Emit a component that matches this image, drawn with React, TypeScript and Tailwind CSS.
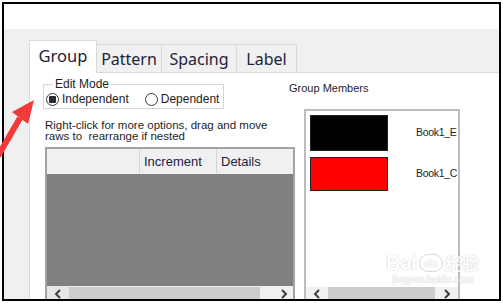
import React from 'react';

const Chevron = ({ dir }: { dir: 'left' | 'right' }) => (
  <svg width="8" height="10" viewBox="0 0 8 10" className="shrink-0">
    <polyline
      points={dir === 'left' ? '6,1 2,5 6,9' : '2,1 6,5 2,9'}
      fill="none"
      stroke="#404040"
      strokeWidth="2"
    />
  </svg>
);

const Radio = ({ checked, label, className }: { checked?: boolean; label: string; className?: string }) => (
  <div className={`flex items-center ${className ?? ''}`}>
    <div className="w-[13px] h-[13px] rounded-full border border-[#3a3a3a] bg-white flex items-center justify-center">
      {checked && <div className="w-[7px] h-[7px] bg-[#2a2a2a] rounded-[1px]" />}
    </div>
    <span className="ml-[3px] text-[12px] leading-[16px] text-[#1e1e1e]">{label}</span>
  </div>
);

const tabs = ['Group', 'Pattern', 'Spacing', 'Label'];
const tabWidths = ['w-[68px]', 'w-[65px]', 'w-[75px]', 'w-[60px]'];

const members = [
  { color: 'bg-black', name: 'Book1_E', h: 'h-[36px]' },
  { color: 'bg-[#ff0000]', name: 'Book1_C', h: 'h-[34px]' },
];

export default function App() {
  return (
    <div className="relative w-[503px] h-[303px] bg-white p-[2px] overflow-hidden font-['Liberation_Sans',Arial,sans-serif]">
      <div className="h-[299px] border-2 border-black flex flex-col overflow-hidden">
        <div className="h-[25px] bg-white shrink-0" />
        <div className="flex-1 bg-[#f0f0f0] pl-[25px] pt-[11px] flex flex-col min-h-0">
          {/* Tabs */}
          <div className="flex items-end h-[33px] relative z-10 shrink-0 font-['Noto_Sans',sans-serif]">
            {tabs.map((t, i) =>
              i === 0 ? (
                <div
                  key={t}
                  className={`${tabWidths[i]} h-[33px] bg-white border border-b-0 border-[#d9d9d9] flex items-center justify-center text-[16.5px] text-[#22223a] pb-[2px]`}
                >
                  {t}
                </div>
              ) : (
                <div
                  key={t}
                  className={`${tabWidths[i]} h-[28px] mb-[1px] bg-[#f0f0f0] border border-l-0 border-b-0 border-[#d9d9d9] flex items-center justify-center text-[16px] text-[#22223a]`}
                >
                  {t}
                </div>
              )
            )}
          </div>

          {/* Panel */}
          <div className="flex-1 -mt-px bg-white border-t border-l border-[#d9d9d9] pl-[13px] flex min-h-0">
            {/* Left column */}
            <div className="w-[252px] shrink-0 flex flex-col pt-[5px]">
              <fieldset className="w-[181px] border border-[#d5d5d5] px-[2px] pb-[1px]">
                <legend className="ml-[7px] px-[2px] text-[12px] leading-[13px] text-[#1e1e1e]">Edit Mode</legend>
                <div className="flex items-center h-[16px]">
                  <Radio checked label="Independent" />
                  <Radio label="Dependent" className="ml-[16px]" />
                </div>
              </fieldset>

              <p className="mt-[11px] ml-[2px] text-[11.5px] leading-[11px] text-[#1e1e1e] whitespace-nowrap">
                Right-click for more options, drag and move
                <br />
                raws to&nbsp; rearrange if nested
              </p>

              <div className="mt-[5px] ml-[2px] w-[250px] h-[160px] shrink-0 border-2 border-[#a3a3a3] flex flex-col">
                <div className="h-[25px] flex bg-[#f0f0f0] text-[13px] text-[#1c1c48]">
                  <div className="w-[93px] border-r border-[#d4d4d4]" />
                  <div className="w-[77px] border-r border-[#d4d4d4] pl-[4px] flex items-center">Increment</div>
                  <div className="flex-1 pl-[4px] flex items-center">Details</div>
                </div>
                <div className="h-[112px] bg-[#808080]" />
                <div className="h-[16px] bg-[#f0f0f0] flex items-center">
                  <div className="w-[22px] h-full flex items-center justify-center bg-[#e6e6e6]">
                    <Chevron dir="left" />
                  </div>
                  <div className="w-[191px] h-[14px] bg-[#cdcdcd]" />
                  <div className="flex-1 h-full flex items-center justify-end pr-[5px]">
                    <Chevron dir="right" />
                  </div>
                </div>
              </div>
            </div>

            {/* Right column */}
            <div className="-ml-[6px] flex-1 flex flex-col pt-[9px] min-h-0">
              <div className="text-[11px] leading-[12px] text-[#1e1e1e]">Group Members</div>
              <div className="mt-[15px] ml-[15px] w-[156px] h-[194px] shrink-0 border-2 border-[#b9bdc3] flex flex-col">
                <div className="flex-1 pt-[4px] pl-[4px] flex flex-col gap-[6px] overflow-hidden">
                  {members.map((m) => (
                    <div key={m.name} className="flex items-center">
                      <div className={`w-[78px] ${m.h} ${m.color} border border-[#222] shrink-0`} />
                      <div className="ml-[28px] whitespace-nowrap text-[10.5px] tracking-[-0.3px] text-[#1e1e1e]">
                        {m.name}
                      </div>
                    </div>
                  ))}
                </div>
                <div className="h-[14px] bg-[#f0f0f0] flex items-center">
                  <div className="w-[22px] h-full flex items-center justify-center">
                    <Chevron dir="left" />
                  </div>
                  <div className="w-[107px] h-[14px] bg-[#cdcdcd]" />
                  <div className="flex-1 h-full flex items-center justify-center">
                    <Chevron dir="right" />
                  </div>
                </div>
              </div>
            </div>
          </div>
        </div>
      </div>

      {/* Baidu watermark */}
      <div className="absolute left-[386px] top-[252px] flex flex-col items-center pointer-events-none opacity-70">
        <div className="flex items-center text-[20px] leading-[22px] font-bold text-white [text-shadow:0_0_1px_#bbb,0_0_1px_#bbb]">
          <span>Bai</span>
          <span className="mx-[2px] w-[24px] h-[18px] rounded-full border border-[#ccc] text-[11px] leading-[16px] text-center">du</span>
          <span className="font-['Noto_Sans_CJK_SC',sans-serif] text-[17px]">经验</span>
        </div>
        <div className="text-[10px] leading-[12px] text-white [text-shadow:0_0_1px_#bbb,0_0_1px_#bbb]">jingyan.baidu.com</div>
      </div>

      {/* Red arrow */}
      <svg className="absolute left-0 top-[94px] pointer-events-none" width="40" height="70" viewBox="0 0 40 70">
        <line x1="-2" y1="62" x2="20" y2="24" stroke="#f23a3a" strokeWidth="6" />
        <polygon points="34,6 12,18 28,30" fill="#f23a3a" />
      </svg>
    </div>
  );
}
